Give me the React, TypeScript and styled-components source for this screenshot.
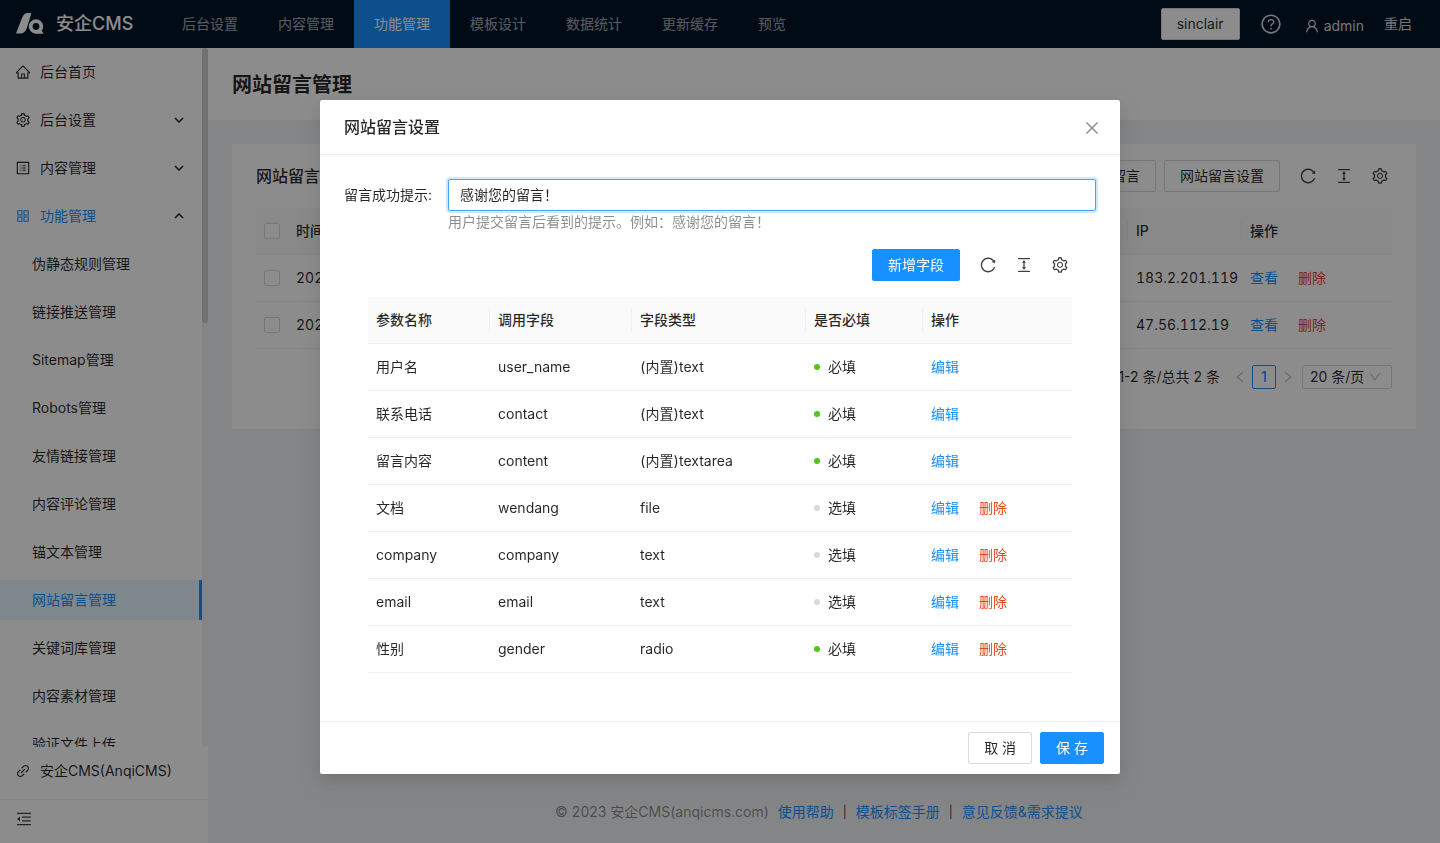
import React from "react";
import styled, { createGlobalStyle, css } from "styled-components";
import {
  AiOutlineHome,
  AiOutlineSetting,
  AiOutlineProfile,
  AiOutlineAppstore,
  AiOutlineLink,
  AiOutlineMenuFold,
  AiOutlineReload,
  AiOutlineColumnHeight,
  AiOutlineClose,
  AiOutlineQuestionCircle,
  AiOutlineUser,
  AiOutlineLeft,
  AiOutlineRight,
  AiOutlineDown,
} from "react-icons/ai";

const color = {
  primary: "#1890ff",
  danger: "#e8471c",
  text: "rgba(0, 0, 0, 0.85)",
  icon: "rgba(0, 0, 0, 0.75)",
  secondary: "rgba(0, 0, 0, 0.45)",
  disabled: "rgba(0, 0, 0, 0.25)",
  line: "#f0f0f0",
  border: "#d9d9d9",
  layout: "#f0f2f5",
};

const GlobalStyle = createGlobalStyle`
  *, *::before, *::after { box-sizing: border-box; }
  body {
    margin: 0;
    color: ${color.text};
    background: ${color.layout};
    font-family: Inter, "Noto Sans CJK SC", sans-serif;
    font-size: 14px;
    line-height: 22px;
  }
  button, input, select { font: inherit; color: inherit; }
  a { color: ${color.primary}; text-decoration: none; }
  h1, h2, p, ul { margin: 0; padding: 0; }
  ul { list-style: none; }
  svg { display: block; flex: none; }
`;

/* ---------- shared controls ---------- */

const Button = styled.button<{ $primary?: boolean }>`
  height: 32px;
  padding: 0 15px;
  border: 1px solid ${(p) => (p.$primary ? color.primary : color.border)};
  border-radius: 2px;
  background: ${(p) => (p.$primary ? color.primary : "#fff")};
  color: ${(p) => (p.$primary ? "#fff" : color.text)};
  white-space: nowrap;
  cursor: pointer;
`;

const IconButton = styled.button`
  display: flex;
  align-items: center;
  justify-content: center;
  width: 18px;
  height: 18px;
  padding: 0;
  border: 0;
  background: none;
  color: ${color.icon};
  font-size: 18px;
  cursor: pointer;
`;

const Toolbar = styled.div`
  display: flex;
  align-items: center;
  justify-content: flex-end;
  height: 64px;
  gap: 8px;
`;

const ToolIcons = styled.div`
  display: flex;
  gap: 18px;
  padding: 0 3px 0 11px;
`;

const CardTitle = styled.h2`
  flex: 1;
  font-size: 16px;
  line-height: 24px;
  font-weight: 500;
`;

const Table = styled.table`
  width: 100%;
  border-collapse: separate;
  border-spacing: 0;
  table-layout: fixed;
  font-variant-numeric: tabular-nums;
`;

const Th = styled.th<{ $plain?: boolean }>`
  position: relative;
  padding: 12px 8px;
  border-bottom: 1px solid ${color.line};
  background: #fafafa;
  font-weight: 500;
  text-align: left;
  ${(p) =>
    !p.$plain &&
    css`
      &::after {
        content: "";
        position: absolute;
        top: 12px;
        right: 0;
        width: 1px;
        height: 22px;
        background: ${color.line};
      }
    `}
`;

const Td = styled.td`
  padding: 12px 8px;
  border-bottom: 1px solid ${color.line};
  white-space: nowrap;
`;

const Checkbox = styled.input`
  display: block;
  appearance: none;
  width: 16px;
  height: 16px;
  margin: 0;
  border: 1px solid ${color.border};
  border-radius: 2px;
  background: #fff;
`;

const Actions = styled.div`
  display: flex;
  gap: 20px;
`;

const DangerLink = styled.a`
  color: ${color.danger};
`;

const TableTools = () => (
  <ToolIcons>
    <IconButton type="button" aria-label="刷新"><AiOutlineReload /></IconButton>
    <IconButton type="button" aria-label="密度"><AiOutlineColumnHeight /></IconButton>
    <IconButton type="button" aria-label="列设置"><AiOutlineSetting /></IconButton>
  </ToolIcons>
);

/* ---------- top bar ---------- */

const TopBar = styled.header`
  display: flex;
  flex: none;
  height: 48px;
  padding: 0 28px 0 16px;
  background: #001529;
  color: #fff;
`;

const Brand = styled.a`
  display: flex;
  align-items: center;
  gap: 12px;
  width: 146px;
  color: #fff;
  font-size: 18px;
  font-weight: 500;
  white-space: nowrap;
`;

const TopNav = styled.nav`
  display: flex;
  flex: 1;
`;

const TopLink = styled.a<{ $active?: boolean }>`
  padding: 0 20px;
  line-height: 48px;
  color: ${(p) => (p.$active ? "#fff" : "rgba(255, 255, 255, 0.65)")};
  background: ${(p) => (p.$active ? color.primary : "transparent")};
`;

const TopTools = styled.div`
  display: flex;
  align-items: center;
  gap: 20px;
`;

const TopAction = styled.a`
  display: flex;
  align-items: center;
  gap: 4px;
  color: rgba(255, 255, 255, 0.85);
`;

const HelpAction = styled(TopAction)`
  padding-right: 2px;
`;

const UserAction = styled(TopAction)`
  padding-top: 4px;
`;

const topLinks = ["后台设置", "内容管理", "功能管理", "模板设计", "数据统计", "更新缓存", "预览"];

const Logo = () => (
  <svg width="28" height="22" viewBox="0 0 28 22" aria-hidden="true">
    <path d="M0 20.600 L6 5 Q8 0 11.500 0 H14.500 Q15.500 0 15.200 1 L11 14.500 Q9.200 20.600 4 20.600 Z" fill="#fff" />
    <circle cx="20" cy="13.500" r="5.300" fill="none" stroke="#fff" strokeWidth="3.800" />
    <path d="M20 17 L25 16.500 L27.500 20.700 H20 Z" fill="#fff" />
  </svg>
);

/* ---------- side menu ---------- */

const Body = styled.div`
  display: flex;
  flex: 1;
  min-height: 0;
`;

const Sider = styled.aside`
  display: flex;
  flex: none;
  flex-direction: column;
  width: 208px;
  background: #fff;
`;

const MenuScroll = styled.div`
  display: flex;
  flex: 1;
  min-height: 0;
`;

const MenuList = styled.ul`
  flex: 1;
  overflow: hidden;
`;

const ScrollTrack = styled.div`
  width: 6px;
  border-radius: 3px;
  background: rgba(0, 0, 0, 0.06);
`;

const ScrollThumb = styled.div`
  height: 275px;
  border-radius: 3px;
  background: rgba(0, 0, 0, 0.15);
`;

const MenuLink = styled.a<{ $child?: boolean; $selected?: boolean; $open?: boolean }>`
  display: flex;
  align-items: center;
  gap: 9px;
  height: 40px;
  margin: 4px 0 8px;
  padding: 0 15px 0 ${(p) => (p.$child ? 32 : 15)}px;
  border-right: 3px solid ${(p) => (p.$selected ? color.primary : "transparent")};
  background: ${(p) => (p.$selected ? "#e6f7ff" : "transparent")};
  color: ${(p) => (p.$selected || p.$open ? color.primary : color.text)};
  white-space: nowrap;

  & > svg { font-size: 16px; }
`;

const MenuLabel = styled.span`
  flex: 1;
`;

const SiderFoot = styled.div`
  display: flex;
  align-items: flex-start;
  height: 44px;
  padding: 10px 15px;
  border-top: 1px solid ${color.line};
  flex: none;
`;

const Arrow = ({ up }: { up?: boolean }) => (
  <svg width="10" height="6" viewBox="0 0 10 6" fill="none" stroke={color.text} strokeWidth="1.500">
    <path d={up ? "M1 5 L5 1 L9 5" : "M1 1 L5 5 L9 1"} />
  </svg>
);

const menuGroups = [
  { label: "后台首页", icon: <AiOutlineHome />, arrow: false, open: false },
  { label: "后台设置", icon: <AiOutlineSetting />, arrow: true, open: false },
  { label: "内容管理", icon: <AiOutlineProfile />, arrow: true, open: false },
  { label: "功能管理", icon: <AiOutlineAppstore />, arrow: true, open: true },
];

const menuChildren = [
  "伪静态规则管理",
  "链接推送管理",
  "Sitemap管理",
  "Robots管理",
  "友情链接管理",
  "内容评论管理",
  "锚文本管理",
  "网站留言管理",
  "关键词库管理",
  "内容素材管理",
  "验证文件上传",
];

/* ---------- page ---------- */

const Screen = styled.div`
  display: flex;
  flex-direction: column;
  height: 100vh;
`;

const Main = styled.main`
  display: flex;
  flex: 1;
  flex-direction: column;
  min-width: 0;
`;

const PageHead = styled.div`
  padding: 21px 24px 19px;
  background: #fff;
`;

const PageTitle = styled.h1`
  font-size: 20px;
  line-height: 32px;
  font-weight: 600;
`;

const Card = styled.section`
  margin: 24px;
  padding: 0 24px 24px;
  background: #fff;
`;

const Pagination = styled.div`
  display: flex;
  align-items: center;
  justify-content: flex-end;
  height: 24px;
  margin: 16px 0;
`;

const PageArrow = styled.button`
  display: flex;
  align-items: center;
  justify-content: center;
  width: 24px;
  height: 24px;
  padding: 0;
  border: 0;
  background: none;
  color: ${color.disabled};
  font-size: 14px;
`;

const PageNumber = styled.button`
  width: 24px;
  height: 24px;
  padding: 0;
  border: 1px solid ${color.primary};
  border-radius: 2px;
  background: #fff;
  color: ${color.primary};
  font-weight: 500;
`;

const PageTotal = styled.span`
  margin-right: 8px;
`;

const SizeBox = styled.label`
  display: flex;
  align-items: center;
  width: 90px;
  height: 24px;
  margin-left: 2px;
  padding: 0 9px 0 7px;
  border: 1px solid ${color.border};
  border-radius: 2px;

  & > svg { color: ${color.disabled}; font-size: 14px; }
`;

const SizeSelect = styled.select`
  flex: 1;
  min-width: 0;
  padding: 0;
  border: 0;
  appearance: none;
  background: none;
`;

const Footer = styled.footer`
  display: flex;
  justify-content: center;
  gap: 9px;
  margin-top: auto;
  padding: 0 10px 20px 0;
  color: ${color.secondary};
  white-space: nowrap;
`;

const Separator = styled.span`
  color: ${color.icon};
  font-size: 12px;
`;

const messages = [
  { time: "2023-03-14 10:24", ip: "183.2.201.119" },
  { time: "2023-03-12 16:08", ip: "47.56.112.19" },
];

/* ---------- dialog ---------- */

const Mask = styled.div`
  position: fixed;
  inset: 0;
  display: flex;
  align-items: flex-start;
  justify-content: center;
  padding-top: 100px;
  background: rgba(0, 0, 0, 0.45);
`;

const Dialog = styled.div`
  width: 800px;
  max-width: 100%;
  border-radius: 2px;
  background: #fff;
  box-shadow: 0 3px 6px -4px rgba(0, 0, 0, 0.12), 0 6px 16px rgba(0, 0, 0, 0.08),
    0 9px 28px 8px rgba(0, 0, 0, 0.05);
`;

const DialogHead = styled.div`
  display: flex;
  align-items: center;
  padding: 16px 19px 16px 24px;
  border-bottom: 1px solid ${color.line};
`;

const DialogTitle = styled.h2`
  flex: 1;
  font-size: 16px;
  line-height: 22px;
  font-weight: 500;
`;

const CloseButton = styled(IconButton)`
  height: 20px;
  padding-top: 2px;
  color: ${color.secondary};
`;

const DialogBody = styled.form`
  padding: 24px;
`;

const Field = styled.div`
  display: flex;
`;

const FieldLabel = styled.label`
  width: 104px;
  line-height: 32px;
`;

const FieldControl = styled.div`
  flex: 1;
`;

const TextInput = styled.input`
  display: block;
  width: 100%;
  height: 32px;
  padding: 3px 11px 5px;
  border: 1px solid #40a9ff;
  border-radius: 2px;
  outline: 0;
  box-shadow: 0 0 0 2px rgba(24, 144, 255, 0.2);
`;

const Hint = styled.p`
  color: ${color.secondary};
`;

const FieldTable = styled.div`
  padding: 0 24px 24px;
`;

const Status = styled.span<{ $on: boolean }>`
  display: flex;
  align-items: center;
  gap: 8px;

  &::before {
    content: "";
    width: 6px;
    height: 6px;
    border-radius: 50%;
    background: ${(p) => (p.$on ? "#52c41a" : color.border)};
  }
`;

const DialogFoot = styled.div`
  display: flex;
  justify-content: flex-end;
  gap: 8px;
  padding: 10px 16px;
  border-top: 1px solid ${color.line};
`;

const fields = [
  { name: "用户名", key: "user_name", type: "(内置)text", required: true, builtin: true },
  { name: "联系电话", key: "contact", type: "(内置)text", required: true, builtin: true },
  { name: "留言内容", key: "content", type: "(内置)textarea", required: true, builtin: true },
  { name: "文档", key: "wendang", type: "file", required: false, builtin: false },
  { name: "company", key: "company", type: "text", required: false, builtin: false },
  { name: "email", key: "email", type: "text", required: false, builtin: false },
  { name: "性别", key: "gender", type: "radio", required: true, builtin: false },
];

const SettingsDialog = () => (
  <Mask>
    <Dialog role="dialog" aria-modal="true" aria-labelledby="dialog-title">
      <DialogHead>
        <DialogTitle id="dialog-title">网站留言设置</DialogTitle>
        <CloseButton type="button" aria-label="关闭"><AiOutlineClose /></CloseButton>
      </DialogHead>
      <DialogBody>
        <Field>
          <FieldLabel htmlFor="success-tip">留言成功提示:</FieldLabel>
          <FieldControl>
            <TextInput id="success-tip" type="text" defaultValue="感谢您的留言！" />
            <Hint>用户提交留言后看到的提示。例如：感谢您的留言！</Hint>
          </FieldControl>
        </Field>
        <FieldTable>
          <Toolbar>
            <Button type="button" $primary>新增字段</Button>
            <TableTools />
          </Toolbar>
          <Table>
            <colgroup>
              <col width="122" />
              <col width="142" />
              <col width="174" />
              <col width="117" />
              <col />
            </colgroup>
            <thead>
              <tr>
                <Th>参数名称</Th>
                <Th>调用字段</Th>
                <Th>字段类型</Th>
                <Th>是否必填</Th>
                <Th $plain>操作</Th>
              </tr>
            </thead>
            <tbody>
              {fields.map((f) => (
                <tr key={f.key}>
                  <Td>{f.name}</Td>
                  <Td>{f.key}</Td>
                  <Td>{f.type}</Td>
                  <Td><Status $on={f.required}>{f.required ? "必填" : "选填"}</Status></Td>
                  <Td>
                    <Actions>
                      <a href="#edit">编辑</a>
                      {!f.builtin && <DangerLink href="#delete">删除</DangerLink>}
                    </Actions>
                  </Td>
                </tr>
              ))}
            </tbody>
          </Table>
        </FieldTable>
      </DialogBody>
      <DialogFoot>
        <Button type="button">取 消</Button>
        <Button type="button" $primary>保 存</Button>
      </DialogFoot>
    </Dialog>
  </Mask>
);

export default function App() {
  return (
    <>
      <GlobalStyle />
      <Screen>
        <TopBar>
          <Brand href="#home"><Logo />安企CMS</Brand>
          <TopNav>
            {topLinks.map((label) => (
              <TopLink key={label} href="#nav" $active={label === "功能管理"}>{label}</TopLink>
            ))}
          </TopNav>
          <TopTools>
            <Button type="button">sinclair</Button>
            <HelpAction href="#help" aria-label="帮助"><AiOutlineQuestionCircle size={22} /></HelpAction>
            <UserAction href="#user"><AiOutlineUser size={16} />admin</UserAction>
            <TopAction href="#restart">重启</TopAction>
          </TopTools>
        </TopBar>
        <Body>
          <Sider>
            <MenuScroll>
              <MenuList>
                {menuGroups.map((m) => (
                  <li key={m.label}>
                    <MenuLink href="#menu" $open={m.open}>
                      {m.icon}
                      <MenuLabel>{m.label}</MenuLabel>
                      {m.arrow && <Arrow up={m.open} />}
                    </MenuLink>
                  </li>
                ))}
                {menuChildren.map((label) => (
                  <li key={label}>
                    <MenuLink href="#menu" $child $selected={label === "网站留言管理"}>{label}</MenuLink>
                  </li>
                ))}
              </MenuList>
              <ScrollTrack><ScrollThumb /></ScrollTrack>
            </MenuScroll>
            <MenuLink href="#about"><AiOutlineLink />安企CMS(AnqiCMS)</MenuLink>
            <SiderFoot>
              <IconButton type="button" aria-label="收起菜单"><AiOutlineMenuFold /></IconButton>
            </SiderFoot>
          </Sider>
          <Main>
            <PageHead><PageTitle>网站留言管理</PageTitle></PageHead>
            <Card>
              <Toolbar>
                <CardTitle>网站留言管理</CardTitle>
                <Button type="button">导出留言</Button>
                <Button type="button">网站留言设置</Button>
                <TableTools />
              </Toolbar>
              <Table>
                <colgroup>
                  <col width="32" />
                  <col />
                  <col width="114" />
                  <col width="150" />
                </colgroup>
                <thead>
                  <tr>
                    <Th $plain><Checkbox type="checkbox" aria-label="全选" /></Th>
                    <Th>时间</Th>
                    <Th>IP</Th>
                    <Th $plain>操作</Th>
                  </tr>
                </thead>
                <tbody>
                  {messages.map((m) => (
                    <tr key={m.ip}>
                      <Td><Checkbox type="checkbox" aria-label={m.ip} /></Td>
                      <Td>{m.time}</Td>
                      <Td>{m.ip}</Td>
                      <Td>
                        <Actions>
                          <a href="#view">查看</a>
                          <DangerLink href="#delete">删除</DangerLink>
                        </Actions>
                      </Td>
                    </tr>
                  ))}
                </tbody>
              </Table>
              <Pagination>
                <PageTotal>第 1-2 条/总共 2 条</PageTotal>
                <PageArrow type="button" aria-label="上一页"><AiOutlineLeft /></PageArrow>
                <PageNumber type="button">1</PageNumber>
                <PageArrow type="button" aria-label="下一页"><AiOutlineRight /></PageArrow>
                <SizeBox>
                  <SizeSelect aria-label="每页条数"><option>20 条/页</option></SizeSelect>
                  <AiOutlineDown />
                </SizeBox>
              </Pagination>
            </Card>
            <Footer>
              <span>© 2023 安企CMS(anqicms.com)</span>
              <a href="#help">使用帮助</a>
              <Separator>|</Separator>
              <a href="#manual">模板标签手册</a>
              <Separator>|</Separator>
              <a href="#feedback">意见反馈&amp;需求提议</a>
            </Footer>
          </Main>
        </Body>
      </Screen>
      <SettingsDialog />
    </>
  );
}
